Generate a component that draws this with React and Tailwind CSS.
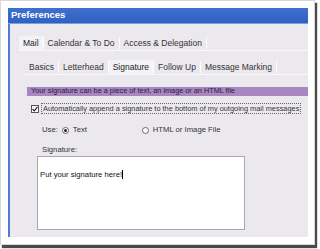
import React from 'react';

function Tabs({ items, active }) {
  return (
    <div className="flex items-center border-b border-[#f7f6f8] h-[16px] text-[8.5px]">
      {items.map((t) => (
        <div key={t} className="flex items-center h-full">
          <span
            className={`px-[4px] leading-[14px] ${
              t === active ? 'bg-[#f3f2f5] text-[#222]' : 'text-[#333]'
            }`}
          >
            {t}
          </span>
          <span className="w-px h-[12px] bg-[#9a98a0] border-r border-white" />
        </div>
      ))}
    </div>
  );
}

export default function App() {
  return (
    <div className="w-[320px] h-[249px] bg-white overflow-hidden" style={{ fontFamily: '"Liberation Sans", Arial, sans-serif' }}>
      <div className="w-[315px] h-[245px] bg-white border border-[#d8d8d8] shadow-[2px_3px_1px_#4a4a4a] pt-[7px] pl-[7px]">
        <div className="w-[300px] h-[229px] flex flex-col">
          <div className="h-[16px] bg-gradient-to-b from-[#3f70cf] to-[#2f61c2] border-b border-[#7d9ddc] flex items-center pl-[3px]">
            <span className="text-white font-bold text-[9.5px]">Preferences</span>
          </div>
          <div className="flex-1 bg-[#ebe9ee] border-l-2 border-[#4f7bd0] text-[7.7px] text-[#333]">
            <div className="pt-[11px] pl-[9px]">
              <Tabs items={['Mail', 'Calendar & To Do', 'Access & Delegation']} active="Mail" />
            </div>
            <div className="pt-[8px] pl-[15px]">
              <Tabs items={['Basics', 'Letterhead', 'Signature', 'Follow Up', 'Message Marking']} active="Signature" />
            </div>
            <div className="mt-[12px] ml-[17px] h-[9px] bg-[#a886bf] flex items-center pl-[4px] text-[#2a2040] text-[7.3px]">
              Your signature can be a piece of text, an image or an HTML file
            </div>
            <div className="mt-[7px] ml-[21px] flex items-center gap-[2px]">
              <span className="w-[8px] h-[8px] border border-[#555] bg-white flex items-center justify-center">
                <svg width="6" height="6" viewBox="0 0 6 6">
                  <path d="M0.5 3 L2.3 4.8 L5.5 0.8" stroke="#222" strokeWidth="1.2" fill="none" />
                </svg>
              </span>
              <span className="border border-dotted border-[#666] px-[1px] leading-[9px] whitespace-nowrap text-[7.4px]">
                Automatically append a signature to the bottom of my outgoing mail messages
              </span>
            </div>
            <div className="mt-[11px] ml-[32px] flex items-center h-[10px]">
              <span>Use:</span>
              <span className="ml-[4px] w-[7px] h-[7px] rounded-full border border-[#666] bg-white flex items-center justify-center">
                <span className="w-[3px] h-[3px] rounded-full bg-[#222]" />
              </span>
              <span className="ml-[4px] w-[69px]">Text</span>
              <span className="w-[7px] h-[7px] rounded-full border border-[#666] bg-white" />
              <span className="ml-[4px]">HTML or Image File</span>
            </div>
            <div className="mt-[10px] ml-[32px] h-[10px] leading-[10px]">Signature:</div>
            <div className="mt-[1px] ml-[27px] w-[208px] h-[74px] bg-white border border-[#a8a8ae] pt-[12px] pl-[2px] text-[#111]">
              Put your signature here!<span className="inline-block w-px h-[9px] bg-black align-middle" />
            </div>
          </div>
        </div>
      </div>
    </div>
  );
}
